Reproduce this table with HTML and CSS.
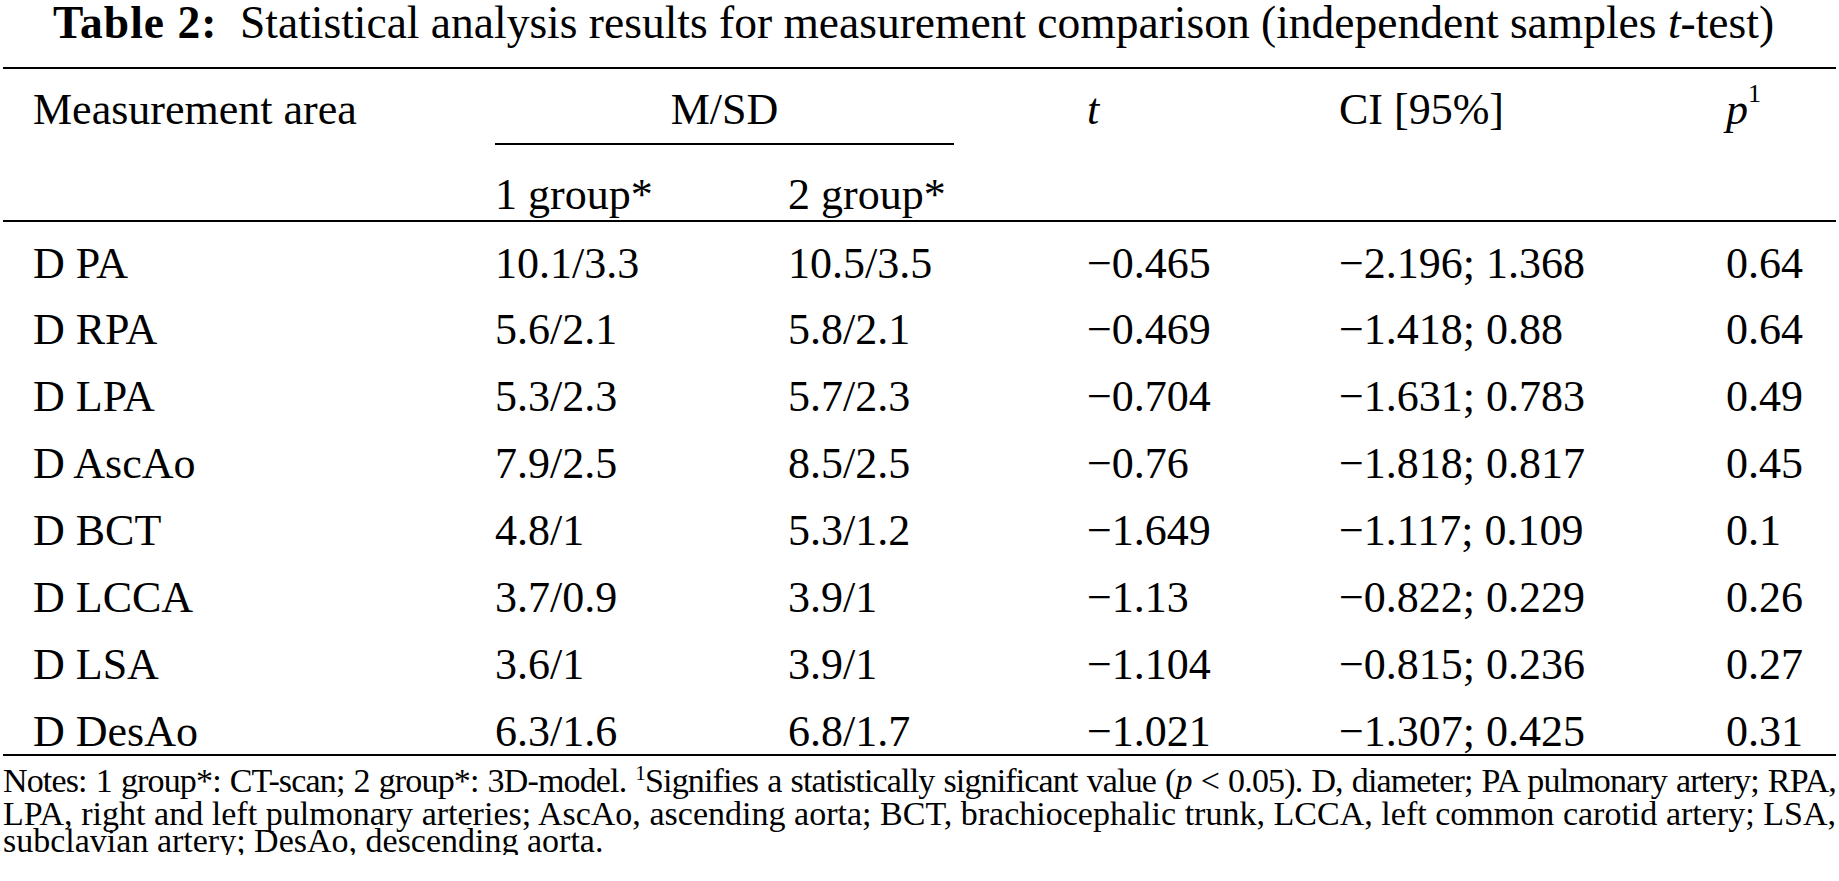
FILE: index.html
```html
<!DOCTYPE html>
<html lang="en">
<head>
<meta charset="utf-8">
<title>Table 2</title>
<link rel="stylesheet" href="styles.css">
</head>
<body>
<div class="page">
  <h1 class="caption"><b>Table 2:</b>&nbsp; Statistical analysis results for measurement comparison (independent samples <i>t</i>-test)</h1>
  <table class="stats">
    <colgroup>
      <col class="c1"><col class="c2"><col class="c3"><col class="c4"><col class="c5"><col class="c6">
    </colgroup>
    <thead>
      <tr class="h1">
        <th rowspan="2">Measurement area</th>
        <th colspan="2" class="msd"><div class="msd-label">M/SD</div></th>
        <th rowspan="2"><i>t</i></th>
        <th rowspan="2">CI [95%]</th>
        <th rowspan="2"><i>p</i><sup>1</sup></th>
      </tr>
      <tr class="h2">
        <th>1 group*</th>
        <th>2 group*</th>
      </tr>
    </thead>
    <tbody>
      <tr><td>D PA</td><td>10.1/3.3</td><td>10.5/3.5</td><td>−0.465</td><td>−2.196; 1.368</td><td>0.64</td></tr>
      <tr><td>D RPA</td><td>5.6/2.1</td><td>5.8/2.1</td><td>−0.469</td><td>−1.418; 0.88</td><td>0.64</td></tr>
      <tr><td>D LPA</td><td>5.3/2.3</td><td>5.7/2.3</td><td>−0.704</td><td>−1.631; 0.783</td><td>0.49</td></tr>
      <tr><td>D AscAo</td><td>7.9/2.5</td><td>8.5/2.5</td><td>−0.76</td><td>−1.818; 0.817</td><td>0.45</td></tr>
      <tr><td>D BCT</td><td>4.8/1</td><td>5.3/1.2</td><td>−1.649</td><td>−1.117; 0.109</td><td>0.1</td></tr>
      <tr><td>D LCCA</td><td>3.7/0.9</td><td>3.9/1</td><td>−1.13</td><td>−0.822; 0.229</td><td>0.26</td></tr>
      <tr><td>D LSA</td><td>3.6/1</td><td>3.9/1</td><td>−1.104</td><td>−0.815; 0.236</td><td>0.27</td></tr>
      <tr><td>D DesAo</td><td>6.3/1.6</td><td>6.8/1.7</td><td>−1.021</td><td>−1.307; 0.425</td><td>0.31</td></tr>
    </tbody>
  </table>
  <div class="notes">
    <p class="line l1">Notes: 1 group*: CT-scan; 2 group*: 3D-model. <sup>1</sup>Signifies a statistically significant value (<i>p</i> &lt; 0.05). D, diameter; PA pulmonary artery; RPA,</p>
    <p class="line l2">LPA, right and left pulmonary arteries; AscAo, ascending aorta; BCT, brachiocephalic trunk, LCCA, left common carotid artery; LSA,</p>
    <p class="line l3">subclavian artery; DesAo, descending aorta.</p>
  </div>
</div>
</body>
</html>
```
FILE: styles.css
```css
html, body {
  margin: 0;
  padding: 0;
  background: #ffffff;
}
body {
  font-family: "Liberation Serif", "Times New Roman", serif;
  color: #000000;
}
.page {
  width: 1833px;
  padding: 0 3px;
}
.caption {
  margin: 0;
  height: 67px;
  padding-right: 12px;
  font-size: 45.5px;
  font-weight: normal;
  line-height: 46px;
  text-align: center;
  white-space: nowrap;
}
.caption b {
  font-weight: bold;
  letter-spacing: 1px;
}
.stats {
  width: 1833px;
  border-collapse: collapse;
  table-layout: fixed;
  font-size: 44px;
  border-top: 2px solid #000;
  border-bottom: 2px solid #000;
}
.c1 { width: 462px; }
.c2 { width: 293px; }
.c3 { width: 299px; }
.c4 { width: 252px; }
.c5 { width: 387px; }
.c6 { width: 140px; }
.stats th, .stats td {
  font-weight: normal;
  text-align: left;
  padding: 0 0 0 30px;
  white-space: nowrap;
  vertical-align: top;
  box-sizing: border-box;
}
.stats thead {
  border-bottom: 2px solid #000;
}
.h1 th {
  height: 76px;
  padding-top: 16px;
  line-height: 50px;
}
.h1 th.msd {
  padding: 16px 0 0 0;
}
.msd-label {
  width: 459px;
  margin-left: 30px;
  text-align: center;
  border-bottom: 2px solid #000;
  height: 60px;
  line-height: 50px;
  box-sizing: border-box;
}
.h1 sup {
  font-size: 26px;
  vertical-align: 0;
  position: relative;
  top: -22px;
}
.h2 th {
  height: 72px;
  padding-top: 25px;
  line-height: 50px;
}
.stats tbody td {
  height: 67px;
  padding-top: 19px;
  line-height: 45px;
}
.stats tbody tr:last-child td {
  height: 64px;
}
.notes {
  font-size: 34px;
  line-height: 27.5px;
  padding-top: 11px;
}
.line {
  margin: 0;
  white-space: nowrap;
  text-align: justify;
  text-align-last: justify;
}
.l1 {
  letter-spacing: -0.85px;
}
.l3 {
  text-align-last: left;
}
.notes sup {
  font-size: 21px;
  vertical-align: 0;
  position: relative;
  top: -12px;
}
```
